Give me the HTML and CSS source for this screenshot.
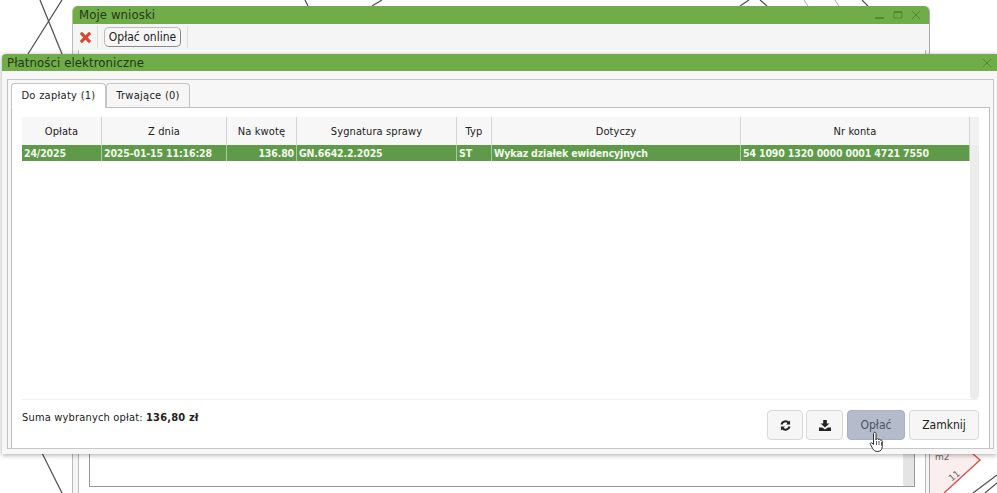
FILE: index.html
```html
<!DOCTYPE html>
<html lang="pl">
<head>
<meta charset="utf-8">
<title>Płatności elektroniczne</title>
<link rel="stylesheet" href="styles.css">
</head>
<body>
<svg class="map" width="997" height="493" viewBox="0 0 997 493" fill="none">
  <polygon points="930,453 972,453 980,460 944,493 930,493" fill="#fbeeee"/>
  <g stroke="#555" stroke-width="1.3">
    <path d="M40 0 L62 54 M62 0 L28 54"/>
    <path d="M42 453 L62 493"/>
    <path d="M305 0 L308 6 M372 6 L382 0"/>
    <path d="M740 6 L749 0 M760 0 L767 6 M862 0 L868 6"/>
    <path d="M973 493 L997 475"/>
    <path d="M985 493 L997 483"/>
  </g>
  <path d="M804 0 L808 6 M835 0 L839 6" stroke="#aaa"/>
  <path d="M944 493 L980 460 L972 453" stroke="#d9534f" stroke-width="1.4"/>
  <text class="map-label" x="935" y="460">m2</text>
  <text class="map-label" x="949" y="480" transform="rotate(-40 953 477)">11</text>
</svg>

<section class="win win-back">
  <header class="titlebar titlebar-back">
    <span class="title-back">Moje wnioski</span>
    <span class="win-icons">
      <svg width="10" height="10" viewBox="0 0 10 10"><path d="M0 8h9" stroke="#4d8a32" stroke-width="2"/></svg>
      <svg width="10" height="10" viewBox="0 0 10 10"><path d="M1 2h8v6H1z" fill="none" stroke="#4d8a32" stroke-width="1"/><path d="M1 2h8" stroke="#4d8a32" stroke-width="2"/></svg>
      <svg width="10" height="10" viewBox="0 0 10 10"><path d="M1 1l8 8M9 1l-8 8" stroke="#4d8a32" stroke-width="1"/></svg>
    </span>
  </header>
  <div class="toolbar">
    <span class="tool-x">
      <svg width="13" height="13" viewBox="0 0 14 14"><path d="M2 2l10 10M12 2L2 12" stroke="#d9472b" stroke-width="3.2"/></svg>
    </span>
    <button class="btn-online">Opłać online</button>
  </div>
  <div class="back-body">
    <div class="back-box"><div class="back-scroll"></div></div>
  </div>
</section>

<section class="win win-front">
  <header class="titlebar titlebar-front">
    <span>Płatności elektroniczne</span>
    <svg width="10" height="10" viewBox="0 0 10 10"><path d="M1 1l8 8M9 1l-8 8" stroke="#4d8a32" stroke-width="1"/></svg>
  </header>
  <div class="panel">
    <nav class="tabs">
      <span class="tab tab-active">Do zapłaty (1)</span>
      <span class="tab">Trwające (0)</span>
    </nav>
    <div class="tab-body">
      <div class="grid-area">
        <div class="grid">
          <div class="row head">
            <span class="c c1">Opłata</span>
            <span class="c c2">Z dnia</span>
            <span class="c c3">Na kwotę</span>
            <span class="c c4">Sygnatura sprawy</span>
            <span class="c c5">Typ</span>
            <span class="c c6">Dotyczy</span>
            <span class="c c7">Nr konta</span>
            <span class="head-end"></span>
          </div>
          <div class="grid-main">
            <div class="rows">
              <div class="row sel">
                <span class="c c1">24/2025</span>
                <span class="c c2">2025-01-15 11:16:28</span>
                <span class="c c3 num">136.80</span>
                <span class="c c4">GN.6642.2.2025</span>
                <span class="c c5">ST</span>
                <span class="c c6">Wykaz działek ewidencyjnych</span>
                <span class="c c7">54 1090 1320 0000 0001 4721 7550</span>
              </div>
            </div>
            <div class="scrollbar"></div>
          </div>
        </div>
      </div>
      <footer class="foot">
        <p class="sum">Suma wybranych opłat: <b>136,80 zł</b></p>
        <div class="actions">
          <button class="btn btn-icon btn-refresh" aria-label="Odśwież">
            <svg width="11" height="11" viewBox="0 0 12 12"><path d="M1.600 5A4.500 4.500 0 0 1 9.400 3" fill="none" stroke="#222" stroke-width="2.200"/><path d="M11 0.600V5H6.600z" fill="#222"/><path d="M10.400 7A4.500 4.500 0 0 1 2.600 9" fill="none" stroke="#222" stroke-width="2.200"/><path d="M1 11.400V7h4.400z" fill="#222"/></svg>
          </button>
          <button class="btn btn-icon btn-down" aria-label="Pobierz">
            <svg width="12" height="11" viewBox="0 0 12 11"><path d="M4.200 0h3.600v3.600H10.400L6 7.600 1.600 3.600h2.600z" fill="#222"/><path d="M0 7.600h3.200L6 9.400l2.800-1.800H12V11H0z" fill="#222"/></svg>
          </button>
          <button class="btn btn-pay">Opłać</button>
          <button class="btn btn-close">Zamknij</button>
        </div>
      </footer>
    </div>
  </div>
</section>

<svg class="cursor" width="17" height="23" viewBox="0 0 16 23">
  <path d="M4.500 1.500c1-.8 2 0 2 1V9l.6-1.200c1-.5 1.700 0 1.800.7.9-.6 1.800-.2 1.900.7.9-.5 2 0 2 1.100v5c0 2.500-1.400 5.200-4.500 5.200-2.500 0-3.900-.9-5-2.700L1 13.500c-.7-1.200.4-2.300 1.500-1.500l1.500 1.500V2.500z" fill="#fff" stroke="#333" stroke-width="1"/>
  <path d="M7 10v4M9.500 10v4M12 11v3.500" stroke="#333" stroke-width=".8"/>
</svg>
</body>
</html>
```
FILE: styles.css
```css
* { box-sizing: border-box; }
html, body { margin: 0; height: 100%; }
body {
  width: 997px;
  height: 493px;
  position: relative;
  overflow: hidden;
  background: #fff;
  font-family: "DejaVu Sans", sans-serif;
  color: #222;
}
.map { position: absolute; left: 0; top: 0; }
.map-label { font: 9px "DejaVu Sans", sans-serif; fill: #666; }

.win { position: absolute; }
.win-back {
  left: 72px; top: 6px; width: 858px; height: 487px;
  background: #f5f5f5;
  border-right: 1px solid #a9a9a9;
  border-left: 1px solid #bbb;
  border-radius: 5px 5px 0 0;
  display: flex; flex-direction: column;
}
.win-front {
  left: 2px; top: 54px; width: 995px; height: 400px;
  background: #f7f7f7;
  box-shadow: 0 1px 5px rgba(0,0,0,.35);
  border-radius: 4px 0 0 0;
  display: flex; flex-direction: column;
}

.titlebar {
  background: #70ac47;
  display: flex; align-items: center; justify-content: space-between;
  flex: none;
}
.titlebar-back {
  height: 18px; padding: 0 8px 0 6px;
  border-radius: 5px 5px 0 0;
  font: 13px "DejaVu Sans Condensed", "DejaVu Sans", sans-serif;
  letter-spacing: .1px; color: #26391b;
}
.title-back { line-height: 18px; }
.win-icons { display: flex; gap: 8px; }
.titlebar-front {
  height: 17px; padding: 0 5px 0 5px;
  font: 13px "DejaVu Sans Condensed", "DejaVu Sans", sans-serif;
  letter-spacing: .1px; color: #24361a;
  border-radius: 4px 0 0 0;
}

.toolbar {
  height: 26px; flex: none;
  display: flex; align-items: center;
  background: #f5f5f5;
}
.tool-x {
  width: 25px; height: 22px;
  border-right: 1px solid #ddd;
  display: flex; align-items: center; justify-content: center;
}
.btn-online {
  margin-left: 6px; height: 20px; width: 77px; padding: 0;
  font: 12px "DejaVu Sans Condensed", "DejaVu Sans", sans-serif;
  color: #222;
  background: #f6f6f6;
  border: 1px solid #bbb; border-bottom-color: #888; border-right-color: #888;
  border-radius: 5px;
}
.toolbar::after {
  content: ""; width: 1px; height: 22px; background: #ddd; margin-left: 6px;
}
.back-body {
  flex: 1;
  margin: 0 3px 0 5px;
  background: #fff;
  border-left: 1px solid #bbb;
  border-right: 1px solid #bbb;
  padding: 0 10px 6px 10px;
  display: flex; align-items: flex-end;
}
.back-box {
  flex: 1; height: 34px;
  border: 1px solid #999;
  display: flex; justify-content: flex-end;
  background: #fff;
}
.back-scroll { width: 11px; background: #e4e4e4; border-radius: 0 0 3px 3px; }

.panel {
  flex: 1;
  margin: 8px 3px 5px 5px;
  border: 1px solid #c6c6c6;
  background: #f7f7f7;
  padding: 3px 3px 0 3px;
  display: flex; flex-direction: column;
  min-height: 0;
}
.tabs { display: flex; height: 25px; flex: none; position: relative; z-index: 1; }
.tab {
  width: 84px; height: 24px;
  display: flex; align-items: center; justify-content: center;
  font: 11px "DejaVu Sans Condensed", "DejaVu Sans", sans-serif;
  letter-spacing: .28px;
  border: 1px solid #c4c4c4; border-bottom: 0;
  border-radius: 4px 4px 0 0;
  background: #f6f6f6;
}
.tab-active { width: 95px; height: 25px; background: #fff; border-bottom: 1px solid #fff; }
.tab-body {
  flex: 1; min-height: 0;
  margin-top: -1px;
  background: #fff;
  border: 1px solid #bdbdbd; border-bottom: 0;
  padding: 9px 10px 0 10px;
  display: flex; flex-direction: column;
}
.grid-area { height: 283px; flex: none; border-bottom: 1px solid #f0f0f0; }
.grid { height: 100%; display: flex; flex-direction: column; }
.row { display: flex; }
.head {
  height: 28px; flex: none;
  background: #f7f7f7;
  font: 11px "DejaVu Sans Condensed", "DejaVu Sans", sans-serif;
  letter-spacing: .1px;
}
.c {
  flex: none;
  border-right: 1px solid #d5d5d5;
  padding: 0 2px;
  display: flex; align-items: center;
  white-space: nowrap; overflow: hidden;
}
.head .c { justify-content: center; }
.c1 { width: 80px; }
.c2 { width: 125px; }
.c3 { width: 70px; }
.c4 { width: 160px; }
.c5 { width: 35px; }
.c6 { width: 249px; }
.c7 { width: 229px; }
.head-end { flex: 1; background: #f2f2f2; }
.grid-main { flex: 1; min-height: 0; display: flex; }
.rows { width: 948px; flex: none; }
.sel {
  height: 16px;
  background: #5e9a48;
  color: #f3f7ef;
  font: bold 10.5px "DejaVu Sans Condensed", "DejaVu Sans", sans-serif;
  letter-spacing: -.15px;
}
.sel .c { border-right-color: #a9cba0; }
.num { justify-content: flex-end; }
.scrollbar { flex: 1; background: #ececec; border-radius: 0 0 4px 4px; }

.foot {
  flex: 1; display: flex; justify-content: space-between;
  padding-top: 10px;
}
.sum {
  margin: 0; padding-top: 1px;
  font: 11px/14px "DejaVu Sans Condensed", "DejaVu Sans", sans-serif;
  letter-spacing: .17px;
}
.actions { display: flex; gap: 3px; height: 30px; }
.btn {
  height: 30px; padding: 0;
  border: 1px solid #d8d8d8;
  border-radius: 4px;
  background: #f6f6f6;
  font: 12px "DejaVu Sans Condensed", "DejaVu Sans", sans-serif;
  color: #222;
  display: flex; align-items: center; justify-content: center;
}
.btn-refresh { width: 36px; }
.btn-down { width: 37px; }
.btn-pay { width: 58px; margin-left: 1px; background: #b4bbcb; border-color: #aab1c2; color: #4b5260; }
.btn-close { width: 70px; margin-left: 1px; }

.cursor { position: absolute; left: 869px; top: 431px; }
```
